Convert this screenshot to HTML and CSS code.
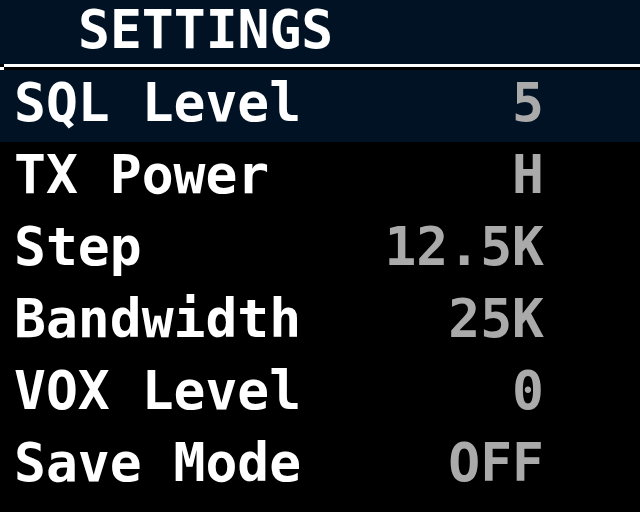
FILE: index.html
```html
<!DOCTYPE html>
<html lang="en">
<head>
    <meta charset="UTF-8">
    <meta name="viewport" content="width=device-width, initial-scale=1.0">
    <title>Settings</title>
    <link rel="stylesheet" href="styles.css">
</head>
<body>
    <div class="screen">
        <div class="header">SETTINGS</div>
        <div class="rule"></div>
        <div class="rule-tail"></div>

        <div class="menu">
            <div class="row selected"><span class="label">SQL Level</span><span class="value">5</span></div>
            <div class="row"><span class="label">TX Power</span><span class="value">H</span></div>
            <div class="row"><span class="label">Step</span><span class="value">12.5K</span></div>
            <div class="row"><span class="label">Bandwidth</span><span class="value">25K</span></div>
            <div class="row"><span class="label">VOX Level</span><span class="value">0</span></div>
            <div class="row"><span class="label">Save Mode</span><span class="value">OFF</span></div>
        </div>
    </div>
</body>
</html>
```

FILE: styles.css
```css
/* Radio screen */
body {
    margin: 0;
    background: #000;
    color: #fff;
    font-family: "DejaVu Sans Mono", monospace;
    font-weight: bold;
    font-size: 53px;
}

.screen {
    width: 640px;
    height: 512px;
    overflow: hidden;
}

/* Title bar */
.header {
    height: 60px;
    line-height: 60px;
    padding: 0 0 4px 78px;
    background: #011225;
}

.rule {
    height: 3px;
    margin-left: 4px;
    background: #fff;
}

.rule-tail {
    width: 4px;
    height: 3px;
    background: #fff;
}

/* Menu rows */
.row {
    display: flex;
    justify-content: space-between;
    width: 530px;
    height: 66px;
    line-height: 66px;
    padding: 0 96px 6px 14px;
}

.selected {
    background: #011225;
}

.value {
    color: #aaa;
}
```
